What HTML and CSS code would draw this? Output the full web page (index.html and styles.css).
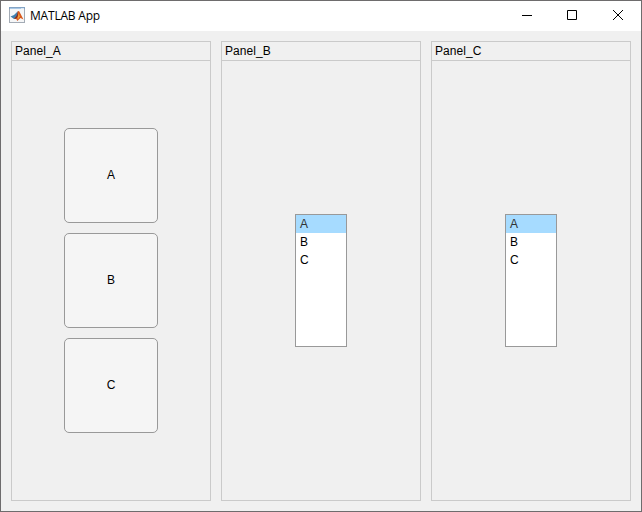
FILE: index.html
```html
<!DOCTYPE html>
<html lang="en">
<head>
<meta charset="utf-8">
<title>MATLAB App</title>
<link rel="stylesheet" href="styles.css">
</head>
<body>
<div class="window">
  <header class="titlebar">
    <svg class="logo" width="16" height="16" viewBox="0 0 16 16">
      <rect x=".5" y=".5" width="15" height="15" fill="#f5f6f7" stroke="#a3abb5"/>
      <rect x="0" y="0" width="16" height="2" fill="#83a3c4"/>
      <rect x="1" y="1" width="14" height="1" fill="#a9c8e6"/>
      <rect x="12" y="1" width="3" height="1" fill="#dbe7f4"/>
      <path d="M1.5 9.6 5 8 8.8 4.2 8 9.5 5 12z" fill="#3f7fae"/>
      <path d="M5 12 8 8.5 9 4 10.2 4.2 14.5 12.5 11.5 11 8.3 14 7 11.5z" fill="#d8581c"/>
      <path d="M5 12 7.5 9 9 4 8.8 9.5 7 11.8z" fill="#7b2b25"/>
      <path d="M9.8 6 10.8 9.5 9 12.5 8.5 11z" fill="#f3a13a"/>
    </svg>
    <h1 class="title">MATLAB App</h1>
    <div class="controls">
      <svg width="10" height="10" viewBox="0 0 10 10"><path d="M1 5.5h10"/></svg>
      <svg width="10" height="10" viewBox="0 0 10 10"><path d="M.5 .5h9v9h-9z"/></svg>
      <svg width="10" height="10" viewBox="0 0 10 10"><path d="M0 0 10 10M10 0 0 10"/></svg>
    </div>
  </header>
  <main class="panels">
    <section class="panel">
      <h2 class="panel-title">Panel_A</h2>
      <div class="panel-body buttons">
        <button class="button">A</button>
        <button class="button">B</button>
        <button class="button">C</button>
      </div>
    </section>
    <section class="panel">
      <h2 class="panel-title">Panel_B</h2>
      <div class="panel-body">
        <ul class="list"><li class="selected">A</li><li>B</li><li>C</li></ul>
      </div>
    </section>
    <section class="panel">
      <h2 class="panel-title">Panel_C</h2>
      <div class="panel-body">
        <ul class="list"><li class="selected">A</li><li>B</li><li>C</li></ul>
      </div>
    </section>
  </main>
</div>
</body>
</html>
```
FILE: styles.css
```css
* { box-sizing: border-box; }
body { margin: 0; }
.window {
  display: flex;
  flex-direction: column;
  width: 642px;
  height: 512px;
  border: 1px solid #6e6c6d;
  background: #f0f0f0;
  color: #000;
  font: 12px/18px "Liberation Sans", Arial, sans-serif;
}
.titlebar {
  display: flex;
  align-items: center;
  height: 30px;
  padding: 0 18px 0 8px;
  background: #fff;
}
.logo { margin-top: -2px; }
.title {
  margin: 0 0 0 5px;
  font: 12px/16px "Open Sans", "Noto Sans", sans-serif;
  letter-spacing: -0.2px;
}
.controls {
  display: flex;
  gap: 36px;
  margin: -2px 0 0 auto;
}
.controls svg {
  fill: none;
  stroke: #000;
  overflow: visible;
}
.panels {
  display: flex;
  flex: 1;
  gap: 10px;
  padding: 10px;
}
.panel {
  display: flex;
  flex-direction: column;
  width: 200px;
  border: 1px solid #cacaca;
}
.panel-title {
  height: 19px;
  margin: 0;
  padding-left: 3px;
  border-bottom: 1px solid #cacaca;
  font: inherit;
  letter-spacing: 0.08px;
}
.panel-body {
  display: flex;
  flex: 1;
  flex-direction: column;
  align-items: center;
  justify-content: center;
}
.buttons { gap: 10px; }
.button {
  width: 94px;
  height: 95px;
  padding: 0 0 2px;
  border: 1px solid #999;
  border-radius: 5px;
  background: #f5f5f5;
  color: #000;
  font: inherit;
}
.list {
  width: 52px;
  height: 133px;
  margin: 0;
  padding: 0;
  border: 1px solid #999;
  background: #fff;
  list-style: none;
}
.list li {
  height: 18px;
  padding-left: 4px;
}
.list .selected {
  background: #a6dbff;
  color: #333;
}
```
